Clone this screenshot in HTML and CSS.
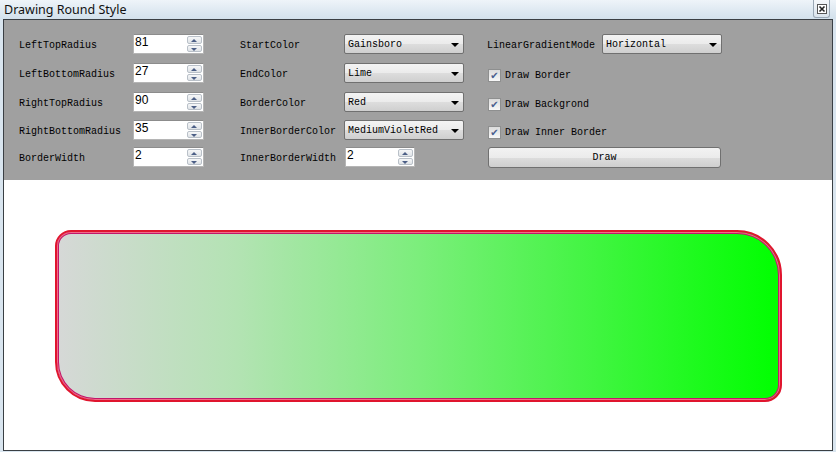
FILE: index.html
```html
<!DOCTYPE html>
<html>
<head>
    <title>Drawing Round Style</title>
    <link rel="stylesheet" href="styles.css">
</head>
<body>

<div class="titlebar">
    <span class="title">Drawing Round Style</span>
    <span class="close-btn">
        <svg width="10" height="10" viewBox="0 0 10 10">
            <rect x="0.5" y="0.5" width="9" height="9" fill="#fff" stroke="#555"/>
            <path d="M2.5 2.5 L7.5 7.5 M7.5 2.5 L2.5 7.5" stroke="#222" stroke-width="1.6"/>
        </svg>
    </span>
</div>

<div class="window">
    <div class="panel">
        <div class="group group-1">
            <label>LeftTopRadius</label>
            <div class="num"><span class="num-value">81</span><span class="spin"><i class="up"></i><i class="down"></i></span></div>
            <label>LeftBottomRadius</label>
            <div class="num"><span class="num-value">27</span><span class="spin"><i class="up"></i><i class="down"></i></span></div>
            <label>RightTopRadius</label>
            <div class="num"><span class="num-value">90</span><span class="spin"><i class="up"></i><i class="down"></i></span></div>
            <label>RightBottomRadius</label>
            <div class="num"><span class="num-value">35</span><span class="spin"><i class="up"></i><i class="down"></i></span></div>
            <label>BorderWidth</label>
            <div class="num"><span class="num-value">2</span><span class="spin"><i class="up"></i><i class="down"></i></span></div>
        </div>

        <div class="group group-2">
            <label>StartColor</label>
            <div class="combo">Gainsboro</div>
            <label>EndColor</label>
            <div class="combo">Lime</div>
            <label>BorderColor</label>
            <div class="combo">Red</div>
            <label>InnerBorderColor</label>
            <div class="combo">MediumVioletRed</div>
            <label>InnerBorderWidth</label>
            <div class="num num-short"><span class="num-value">2</span><span class="spin"><i class="up"></i><i class="down"></i></span></div>
        </div>

        <div class="group group-3">
            <label>LinearGradientMode</label>
            <div class="combo">Horizontal</div>
            <div class="check"><span class="box">&#10004;</span>Draw Border</div>
            <div class="check"><span class="box">&#10004;</span>Draw Backgrond</div>
            <div class="check"><span class="box">&#10004;</span>Draw Inner Border</div>
            <button class="draw-btn">Draw</button>
        </div>
    </div>

    <div class="canvas">
        <div class="round-shape"></div>
    </div>
</div>

</body>
</html>
```

FILE: styles.css
```css
:root {
    --panel-bg: #a0a0a0;
    --frame: #d9e5ef;
    --mono: 'Liberation Mono', 'DejaVu Sans Mono', monospace;
}

html, body {
    margin: 0;
    padding: 0;
}

body {
    width: 836px;
    height: 452px;
    overflow: hidden;
    background: var(--frame);
    font-family: var(--mono);
    font-size: 10px;
    color: #000;
}

.titlebar {
    height: 19px;
    position: relative;
    background: linear-gradient(180deg, #eef4f9 0%, #dde8f1 60%, #d3e1ec 100%);
}

.title {
    position: absolute;
    left: 4px;
    top: 1px;
    font-family: 'Noto Sans', 'Open Sans', sans-serif;
    font-size: 12.5px;
    color: #111;
}

.close-btn {
    position: absolute;
    right: 6px;
    top: 0;
    width: 15px;
    height: 17px;
    border: 1px solid #9aa8b5;
    border-top: none;
    border-radius: 0 0 3px 3px;
    background: linear-gradient(180deg, #f4f7fa, #dbe4ec);
    display: flex;
    align-items: center;
    justify-content: center;
}

.window {
    margin: 0 3px;
    height: 430px;
    border: 1px solid #3a3f44;
    background: #fff;
}

.panel {
    background: var(--panel-bg);
    height: 146px;
    padding: 14px 0 0 15px;
    display: flex;
}

.group {
    display: grid;
    grid-template-rows: 29px 29px 28px 27px 20px;
    align-items: start;
}

.group-1 {
    grid-template-columns: 114px 71px;
}

.group-2 {
    grid-template-columns: 105px 119px;
    margin-left: 36px;
}

.group-3 {
    grid-template-columns: 115px 120px;
    margin-left: 23px;
}

label {
    height: 20px;
    line-height: 24px;
    white-space: nowrap;
}

.num {
    display: flex;
    height: 20px;
    box-sizing: border-box;
    background: #fff;
    border: 1px solid #b5b5b5;
    border-top-color: #8c8c8c;
}

.num-short {
    width: 70px;
}

.num-value {
    flex: 1;
    font-family: 'Liberation Sans', Arial, sans-serif;
    font-size: 12px;
    line-height: 14px;
    padding-left: 1px;
}

.spin {
    width: 15px;
    display: flex;
    flex-direction: column;
    gap: 1px;
    padding: 1px 1px 1px 0;
}

.spin i {
    flex: 1;
    position: relative;
    border: 1px solid #b9c0c8;
    border-radius: 2px;
    background: linear-gradient(180deg, #f6f7f8, #dfe3e7);
}

.spin i::after {
    content: '';
    position: absolute;
    left: 3px;
    top: 2px;
    border-left: 3px solid transparent;
    border-right: 3px solid transparent;
}

.spin .up::after {
    border-bottom: 3px solid #4c5f86;
}

.spin .down::after {
    border-top: 3px solid #4c5f86;
}

.combo {
    height: 20px;
    box-sizing: border-box;
    border: 1px solid #707070;
    border-radius: 2px;
    background: linear-gradient(180deg, #f3f3f3 0%, #ebebeb 50%, #dddddd 51%, #cfcfcf 100%);
    line-height: 19px;
    padding-left: 3px;
    position: relative;
    white-space: nowrap;
}

.group-2 .combo {
    margin-left: -1px;
}

.combo::after {
    content: '';
    position: absolute;
    right: 4px;
    top: 8px;
    border-left: 4px solid transparent;
    border-right: 4px solid transparent;
    border-top: 4px solid #000;
}

.check {
    grid-column: 1 / 3;
    height: 20px;
    display: flex;
    align-items: center;
    padding-left: 1px;
    gap: 4px;
    padding-top: 2px;
}

.box {
    width: 11px;
    height: 11px;
    border: 1px solid #8e8f8f;
    background: linear-gradient(180deg, #dcdcdc, #f7f7f7);
    color: #4a5e8e;
    font-size: 10px;
    line-height: 11px;
    text-align: center;
    font-family: 'DejaVu Sans', sans-serif;
}

.draw-btn {
    grid-column: 1 / 3;
    margin-left: 1px;
    width: 233px;
    height: 21px;
    border: 1px solid #707070;
    border-radius: 3px;
    background: linear-gradient(180deg, #f2f2f2 0%, #ebebeb 50%, #dddddd 51%, #cfcfcf 100%);
    font-family: var(--mono);
    font-size: 10px;
    color: #000;
    padding: 0;
}

.canvas {
    height: 270px;
    padding: 50px 0 0 51px;
    box-sizing: border-box;
}

.round-shape {
    width: 727px;
    height: 172px;
    box-sizing: border-box;
    border: 2px solid #e0152e;
    border-radius: 16px 45px 17px 40px;
    background: linear-gradient(90deg, #d6d8d7 0%, #b3e3b3 25%, #7cee7c 50%, #3ff53f 75%, #00ff00 100%);
    box-shadow: inset 0 0 0 1px #f06a8a, inset 0 0 0 2px #c3166a;
}
```
